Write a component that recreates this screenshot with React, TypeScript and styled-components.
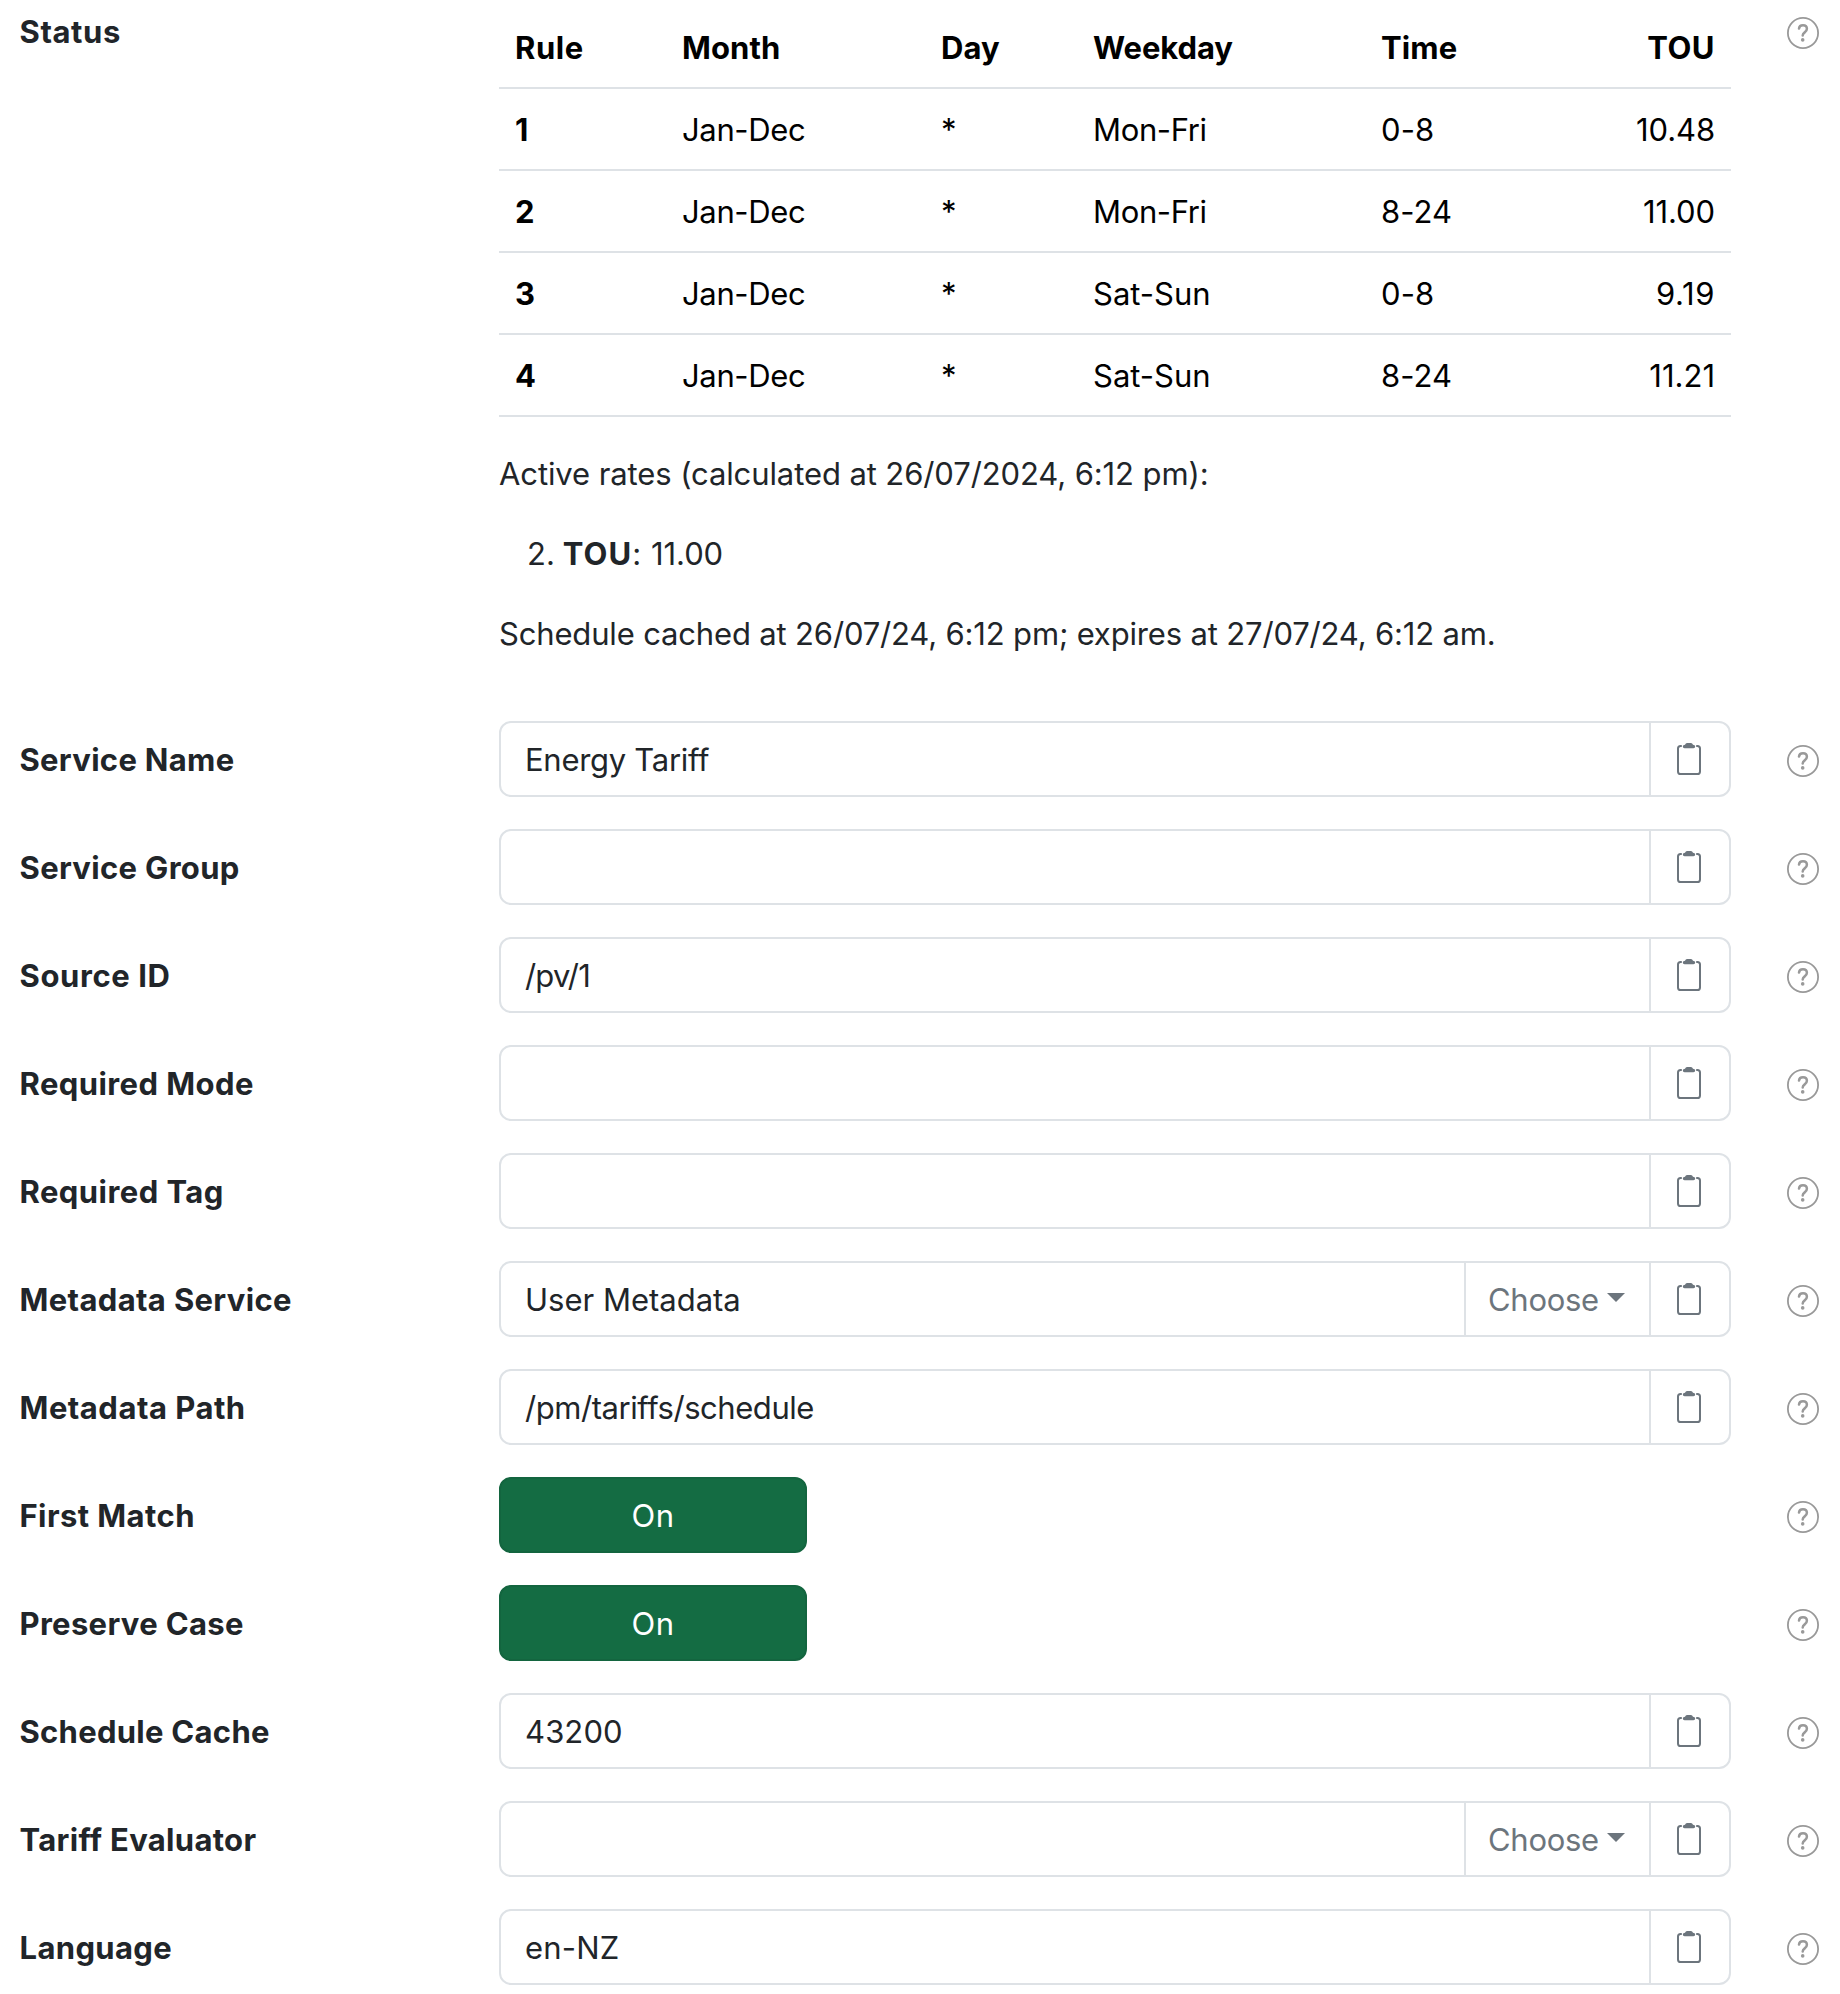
import React from "react";
import styled, { createGlobalStyle, css } from "styled-components";

const ink = "#212529";
const line = "#dee2e6";
const muted = "#6c757d";

const GlobalStyle = createGlobalStyle`
  *, *::before, *::after { box-sizing: border-box; }
  body {
    margin: 0;
    background: #fff;
    color: ${ink};
    font: 400 31px/48px Inter, "Liberation Sans", sans-serif;
  }
`;

const tracked = css<{ $track?: number }>`
  letter-spacing: ${(p) => p.$track ?? 0}px;
`;

const Form = styled.main`
  width: 1840px;
  height: 1994px;
  overflow: hidden;
  padding: 7px 21px 0 19.5px;
  display: flex;
  flex-direction: column;
`;

const Row = styled.div`
  display: grid;
  grid-template-columns: 479.5px 1232px 88px;
  flex-shrink: 0;
  justify-content: start;
  margin-bottom: 32px;
`;

const StatusRow = styled(Row)`
  height: 682px;
`;

const FieldRow = styled(Row)`
  height: 76px;
`;

const Label = styled.label<{ $track?: number; $top?: number }>`
  padding-top: ${(p) => p.$top ?? 15}px;
  font-weight: 700;
  white-space: nowrap;
  ${tracked}
`;

const Help = styled.button<{ $top?: number }>`
  width: 32px;
  height: 32px;
  margin: ${(p) => p.$top ?? 24}px 0 0 56px;
  padding: 0;
  border: 0;
  background: none;
  color: #999;
  svg { display: block; }
`;

const Table = styled.table`
  width: 1232px;
  border-collapse: separate;
  border-spacing: 0;
  table-layout: fixed;
  color: #000;
`;

const cell = css<{ $end?: boolean }>`
  height: 82px;
  padding: 17px 16px 15px;
  border-bottom: 2px solid ${line};
  text-align: ${(p) => (p.$end ? "right" : "left")};
  white-space: nowrap;
  ${tracked}
`;
const Th = styled.th<{ $end?: boolean; $track?: number }>`
  font-weight: 700;
  ${cell}
`;
const Td = styled.td<{ $end?: boolean; $track?: number }>`
  ${cell}
`;
const Col = styled.col<{ $w: number }>`
  width: ${(p) => p.$w}px;
`;

const Note = styled.p<{ $track?: number }>`
  margin: 33px 0 32px;
  white-space: nowrap;
  ${tracked}
`;

const Rates = styled.ol`
  list-style: none;
  margin: 0;
  padding: 0 0 0 28px;
`;
const Rate = styled.li`
  display: flex;
  gap: 8px;
`;
const RateName = styled.span`
  strong { font-weight: 700; letter-spacing: 1px; }
`;
const RateValue = styled.span`
  margin-left: 2px;
  letter-spacing: -0.1px;
`;

const Cached = styled(Note)`
  margin: 32px 0 0;
`;

const Group = styled.div`
  display: flex;
  height: 76px;
  border: 2px solid ${line};
  border-radius: 12px;
`;
const Value = styled.div<{ $track?: number }>`
  flex: 1;
  padding: 13px 24px 0;
  white-space: nowrap;
  ${tracked}
`;
const Addon = styled.button`
  width: 80px;
  padding: 0 0 0 26px;
  border: 0;
  border-left: 2px solid ${line};
  background: none;
  color: ${muted};
  svg { display: block; }
`;
const Choose = styled.button`
  display: flex;
  width: 185px;
  padding: 13px 0 0 22px;
  border: 0;
  border-left: 2px solid ${line};
  background: none;
  color: ${muted};
  font: inherit;
  letter-spacing: -0.3px;
`;
const Caret = styled.span`
  width: 0;
  height: 0;
  margin: 17px 0 0 8px;
  border-left: 9px solid transparent;
  border-right: 9px solid transparent;
  border-top: 9px solid currentColor;
`;

const Toggle = styled.button`
  width: 308px;
  height: 76px;
  padding: 2px 0 0;
  border: 2px solid #13653f;
  border-radius: 12px;
  background: #146c43;
  color: #fff;
  font: inherit;
  letter-spacing: 0.4px;
`;

const HelpIcon = () => (
  <svg width="32" height="32" viewBox="0 0 32 32" fill="none" stroke="currentColor">
    <circle cx="16" cy="16" r="15.1" strokeWidth="1.8" />
    <path
      d="M12 11.6C12.2 9.4 13.8 8.3 16 8.3C18.3 8.3 19.9 9.7 19.9 11.8C19.9 13.5 19 14.5 17.7 15.4C16.3 16.4 15.7 17 15.7 18.6"
      strokeWidth="2.5"
      strokeLinecap="round"
    />
    <circle cx="15.7" cy="22.9" r="1.8" fill="currentColor" stroke="none" />
  </svg>
);

const ClipboardIcon = () => (
  <svg width="24" height="32" viewBox="0 0 24 32" fill="none" stroke="currentColor">
    <path
      d="M4.8 3H3.6Q1 3 1 5.6V28.4Q1 31 3.6 31H20.4Q23 31 23 28.4V5.6Q23 3 20.4 3H19.2"
      strokeWidth="2"
    />
    <path
      d="M8 1.7Q8.7 0 10 0H14Q15.3 0 16 1.7Q18.2 2 18.2 3.4Q18.2 5.2 16.4 5.2H7.6Q5.8 5.2 5.8 3.4Q5.8 2 8 1.7Z"
      fill="currentColor"
      stroke="none"
    />
  </svg>
);

const columns: [string, number, number][] = [
  ["Rule", 167, 0.6],
  ["Month", 259, 0.1],
  ["Day", 152, 0.1],
  ["Weekday", 288, -0.1],
  ["Time", 169, 0.1],
  ["TOU", 197, 0.5],
];

const rules = [
  { rule: "1", month: "Jan-Dec", day: "*", weekday: "Mon-Fri", time: "0-8", rate: "10.48", track: -0.1 },
  { rule: "2", month: "Jan-Dec", day: "*", weekday: "Mon-Fri", time: "8-24", rate: "11.00", track: -0.1 },
  { rule: "3", month: "Jan-Dec", day: "*", weekday: "Sat-Sun", time: "0-8", rate: "9.19", track: 0.6 },
  { rule: "4", month: "Jan-Dec", day: "*", weekday: "Sat-Sun", time: "8-24", rate: "11.21", track: 0 },
];

type Field = {
  label: string;
  track: number;
  kind?: "choose" | "toggle";
  value?: string;
  valueTrack?: number;
};

const fields: Field[] = [
  { label: "Service Name", track: 0.3, value: "Energy Tariff", valueTrack: -0.28 },
  { label: "Service Group", track: 0.33 },
  { label: "Source ID", track: 0.6, value: "/pv/1", valueTrack: -0.8 },
  { label: "Required Mode", track: 0.42 },
  { label: "Required Tag", track: 0.45 },
  { label: "Metadata Service", track: 0.35, kind: "choose", value: "User Metadata" },
  { label: "Metadata Path", track: 0.5, value: "/pm/tariffs/schedule", valueTrack: -0.44 },
  { label: "First Match", track: 0.42, kind: "toggle", value: "On" },
  { label: "Preserve Case", track: 0.33, kind: "toggle", value: "On" },
  { label: "Schedule Cache", track: 0.28, value: "43200", valueTrack: 0.1 },
  { label: "Tariff Evaluator", track: 0.31, kind: "choose" },
  { label: "Language", track: 0.35, value: "en-NZ", valueTrack: 0.2 },
];

const Control = ({ field }: { field: Field }) => {
  if (field.kind === "toggle") return <Toggle type="button">{field.value}</Toggle>;
  return (
    <Group>
      <Value $track={field.valueTrack}>{field.value}</Value>
      {field.kind === "choose" && (
        <Choose type="button">
          Choose
          <Caret />
        </Choose>
      )}
      <Addon type="button">
        <ClipboardIcon />
      </Addon>
    </Group>
  );
};

export default function App() {
  return (
    <>
      <GlobalStyle />
      <Form>
        <StatusRow>
          <Label $track={0.6} $top={1}>Status</Label>
          <div>
            <Table>
              <colgroup>
                {columns.map(([name, w]) => <Col key={name} $w={w} />)}
              </colgroup>
              <thead>
                <tr>
                  {columns.map(([name, , track]) => (
                    <Th key={name} $track={track} $end={name === "TOU"}>{name}</Th>
                  ))}
                </tr>
              </thead>
              <tbody>
                {rules.map((r) => (
                  <tr key={r.rule}>
                    <Th>{r.rule}</Th>
                    <Td $track={-0.35}>{r.month}</Td>
                    <Td>{r.day}</Td>
                    <Td $track={r.weekday === "Sat-Sun" ? 0 : -0.35}>{r.weekday}</Td>
                    <Td $track={0.1}>{r.time}</Td>
                    <Td $end $track={r.track}>{r.rate}</Td>
                  </tr>
                ))}
              </tbody>
            </Table>
            <Note $track={-0.1}>Active rates (calculated at 26/07/2024, 6:12 pm):</Note>
            <Rates>
              <Rate>
                <span>2.</span>
                <RateName><strong>TOU</strong>:</RateName>
                <RateValue>11.00</RateValue>
              </Rate>
            </Rates>
            <Cached $track={-0.16}>
              Schedule cached at 26/07/24, 6:12 pm; expires at 27/07/24, 6:12 am.
            </Cached>
          </div>
          <Help type="button" $top={10}><HelpIcon /></Help>
        </StatusRow>
        {fields.map((field) => (
          <FieldRow key={field.label}>
            <Label $track={field.track}>{field.label}</Label>
            <Control field={field} />
            <Help type="button"><HelpIcon /></Help>
          </FieldRow>
        ))}
      </Form>
    </>
  );
}
